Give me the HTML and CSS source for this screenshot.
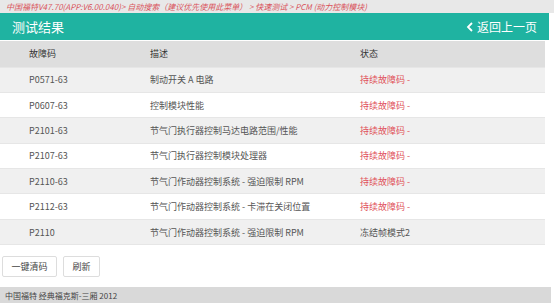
FILE: index.html
```html
<!DOCTYPE html>
<html lang="zh-CN">
<head>
    <meta charset="UTF-8">
    <meta name="viewport" content="width=device-width, initial-scale=1.0">
    <title>测试结果</title>
    <link rel="stylesheet" href="styles.css">
</head>
<body>
    <div class="breadcrumb">中国福特V47.70(APP:V6.00.040)&gt; 自动搜索（建议优先使用此菜单） &gt; 快速测试 &gt; PCM (动力控制模块)</div>

    <div class="page">
        <div class="title-bar">
            <span class="title">测试结果</span>
            <a class="back" href="#">
                <svg width="8" height="10" viewBox="0 0 8 10"><path d="M6 1 L2 5 L6 9" fill="none" stroke="#fff" stroke-width="1.8"/></svg>
                返回上一页
            </a>
        </div>

        <table class="dtc-table">
            <thead>
                <tr>
                    <th class="col-code">故障码</th>
                    <th class="col-desc">描述</th>
                    <th>状态</th>
                </tr>
            </thead>
            <tbody>
                <tr><td>P0571-63</td><td>制动开关 A 电路</td><td class="status">持续故障码 -</td></tr>
                <tr><td>P0607-63</td><td>控制模块性能</td><td class="status">持续故障码 -</td></tr>
                <tr><td>P2101-63</td><td>节气门执行器控制马达电路范围/性能</td><td class="status">持续故障码 -</td></tr>
                <tr><td>P2107-63</td><td>节气门执行器控制模块处理器</td><td class="status">持续故障码 -</td></tr>
                <tr><td>P2110-63</td><td>节气门作动器控制系统 - 强迫限制 RPM</td><td class="status">持续故障码 -</td></tr>
                <tr><td>P2112-63</td><td>节气门作动器控制系统 - 卡滞在关闭位置</td><td class="status">持续故障码 -</td></tr>
                <tr><td>P2110</td><td>节气门作动器控制系统 - 强迫限制 RPM</td><td>冻结帧模式2</td></tr>
            </tbody>
        </table>

        <div class="actions">
            <button class="btn btn-clear">一键清码</button>
            <button class="btn btn-refresh">刷新</button>
        </div>
    </div>

    <div class="footer">中国福特 经典福克斯-三厢 2012</div>
</body>
</html>
```

FILE: styles.css
```css
* {
    margin: 0;
    padding: 0;
    box-sizing: border-box;
    font-family: 'Noto Sans CJK SC', 'Noto Sans', sans-serif;
}

body {
    background: white;
    color: #555;
    font-size: 9px;
    width: 554px;
}

.breadcrumb {
    height: 13px;
    line-height: 13px;
    background: #e8e8e8;
    color: #d9535b;
    font-size: 8px;
    font-style: italic;
    padding-left: 6px;
    white-space: nowrap;
    overflow: hidden;
}

.page {
    width: 549px;
}

.title-bar {
    height: 27px;
    background: #1fb3a1;
    display: flex;
    align-items: center;
    justify-content: space-between;
    padding: 0 12px;
    margin-bottom: 1px;
}

.title {
    color: white;
    font-size: 13px;
}

.back {
    color: white;
    font-size: 12px;
    text-decoration: none;
    display: flex;
    align-items: center;
    gap: 3px;
}

.dtc-table {
    width: 545px;
    border-collapse: collapse;
    table-layout: fixed;
}

.dtc-table th,
.dtc-table td {
    text-align: left;
    padding-left: 29px;
    height: 25.4px;
    white-space: nowrap;
    border-bottom: 1px solid #e6e6e6;
}

.dtc-table th {
    height: 26px;
    background: #dedede;
    color: #333;
    font-weight: normal;
}

.col-code { width: 121px; }
.col-desc { width: 210px; }

.dtc-table tbody tr:nth-child(odd) {
    background: #f0f0f0;
}

.dtc-table tbody tr:nth-child(even) {
    background: white;
}

.status {
    color: #e0505a;
}

.actions {
    display: flex;
    gap: 6px;
    padding: 11px 0 10px 2px;
}

.btn {
    height: 21px;
    padding: 0;
    background: white;
    border: 1px solid #ddd;
    border-radius: 2px;
    color: #444;
    font-size: 9px;
    white-space: nowrap;
}

.btn-clear { width: 55px; }
.btn-refresh { width: 37px; }

.footer {
    width: 551px;
    height: 18px;
    line-height: 18px;
    background: #d9d9d9;
    color: #444;
    font-size: 8px;
    padding-left: 5px;
}
```
